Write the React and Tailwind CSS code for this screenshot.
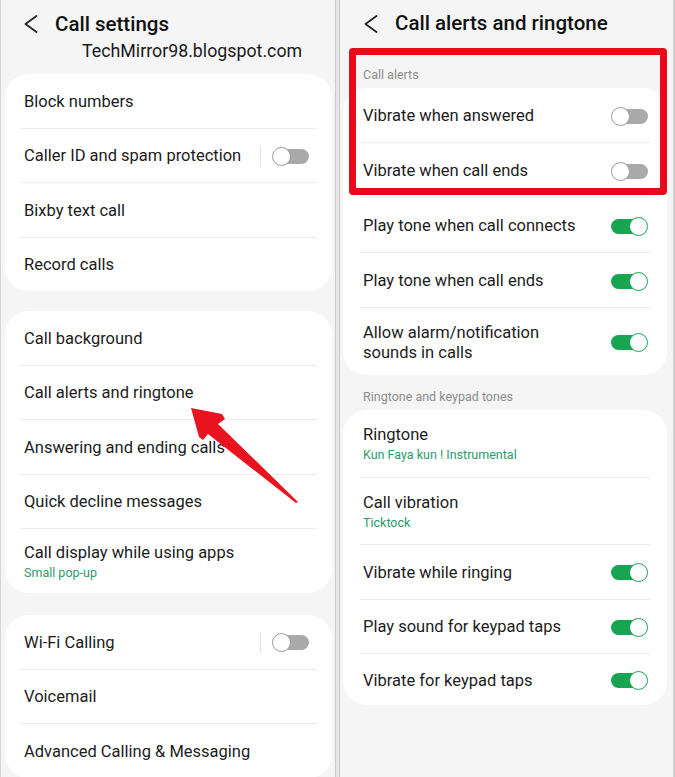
// App.jsx - Samsung call settings side-by-side screenshot
import React from 'react';

const FONT = { fontFamily: 'Roboto, "Noto Sans", Arial, sans-serif' };

const Toggle = ({ on }) => {
  if (on) {
    return (
      <div className="relative w-[37px] h-[19px] shrink-0">
        <div className="absolute left-0 top-[2px] h-[15px] w-[28px] rounded-full bg-[#17a552]"></div>
        <div className="absolute right-0 top-0 w-[19px] h-[19px] rounded-full bg-white border-[1.5px] border-[#17a552]"></div>
      </div>
    );
  }
  return (
    <div className="relative w-[37px] h-[19px] shrink-0">
      <div className="absolute right-0 top-[2px] h-[15px] w-[28px] rounded-full bg-[#a9a9a9]"></div>
      <div className="absolute left-0 top-0 w-[19px] h-[19px] rounded-full bg-white border-[1.5px] border-[#9c9c9c]"></div>
    </div>
  );
};

const Chevron = () => (
  <svg width="14" height="18" viewBox="0 0 14 18" className="shrink-0">
    <polyline points="12.5,1 1.5,9 12.5,17" fill="none" stroke="#222" strokeWidth="1.8" strokeLinecap="round" strokeLinejoin="round" />
  </svg>
);

const Divider = ({ side }) => (
  <div className={`h-px bg-[#ececec] ${side === 'left' ? 'mx-[15px]' : 'mx-[17px]'}`}></div>
);

const Row = ({ label, sub, toggle, sep, h, side }) => (
  <div
    className={`flex items-center justify-between pt-[2px] ${side === 'left' ? 'pl-[19px] pr-[23px]' : 'pl-[20px] pr-[19px]'}`}
    style={{ height: h }}
  >
    <div className="flex flex-col">
      <span className="text-[16.5px] leading-[20px] text-[#1c1c1c]">{label}</span>
      {sub && <span className="text-[12.5px] leading-[18px] text-[#2b9a6c] mt-[1px]">{sub}</span>}
    </div>
    {toggle !== undefined && (
      <div className="flex items-center">
        {sep && <div className="w-px h-[21px] bg-[#e2e2e2] mr-[11px]"></div>}
        <Toggle on={toggle} />
      </div>
    )}
  </div>
);

const Card = ({ rows, side, className }) => (
  <div className={`bg-white rounded-[24px] overflow-hidden ${className}`}>
    {rows.map((r, i) => (
      <React.Fragment key={i}>
        {i > 0 && <Divider side={side} />}
        <Row {...r} side={side} />
      </React.Fragment>
    ))}
  </div>
);

const SectionLabel = ({ children }) => (
  <div className="pl-[20px] text-[12.5px] leading-[16px] text-[#8c8c8c]">{children}</div>
);

export default function App() {
  const left1 = [
    { label: 'Block numbers', h: 53.5 },
    { label: 'Caller ID and spam protection', h: 53.5, toggle: false, sep: true },
    { label: 'Bixby text call', h: 53.5 },
    { label: 'Record calls', h: 53.5 },
  ];
  const left2 = [
    { label: 'Call background', h: 53.5 },
    { label: 'Call alerts and ringtone', h: 53.5 },
    { label: 'Answering and ending calls', h: 53.5 },
    { label: 'Quick decline messages', h: 53.5 },
    { label: 'Call display while using apps', sub: 'Small pop-up', h: 64 },
  ];
  const left3 = [
    { label: 'Wi-Fi Calling', h: 53.5, toggle: false, sep: true },
    { label: 'Voicemail', h: 53.5 },
    { label: 'Advanced Calling & Messaging', h: 53.5 },
  ];
  const right1 = [
    { label: 'Vibrate when answered', h: 54, toggle: false },
    { label: 'Vibrate when call ends', h: 54, toggle: false },
    { label: 'Play tone when call connects', h: 54, toggle: true },
    { label: 'Play tone when call ends', h: 54, toggle: true },
    { label: <>Allow alarm/notification<br />sounds in calls</>, h: 67, toggle: true },
  ];
  const right2 = [
    { label: 'Ringtone', sub: 'Kun Faya kun ! Instrumental', h: 67 },
    { label: 'Call vibration', sub: 'Ticktock', h: 66 },
    { label: 'Vibrate while ringing', h: 53.5, toggle: true },
    { label: 'Play sound for keypad taps', h: 53.5, toggle: true },
    { label: 'Vibrate for keypad taps', h: 51, toggle: true },
  ];

  return (
    <div className="relative w-[675px] h-[777px] flex overflow-hidden bg-[#f5f5f5]" style={FONT}>
      {/* Left screen */}
      <div className="w-[335px] h-full bg-[#f5f5f5] border-l border-[#d6d6d6] pl-[4px] pr-[3px]">
        <div className="pt-[11px] h-[74px]">
          <div className="flex items-center h-[26px] pl-[19px] gap-[17px]">
            <Chevron />
            <span className="text-[20.5px] font-medium text-[#111]">Call settings</span>
          </div>
          <div className="h-[28px] leading-[28px] pl-[77px] text-[17.8px] text-[#1a1a1a]">TechMirror98.blogspot.com</div>
        </div>
        <Card rows={left1} side="left" />
        <Card rows={left2} side="left" className="mt-[20px]" />
        <Card rows={left3} side="left" className="mt-[22px]" />
      </div>

      {/* Divider between screens */}
      <div className="w-[5px] h-full bg-[#e6e6e6] border-x border-[#c9c9c9]"></div>

      {/* Right screen */}
      <div className="relative flex-1 h-full bg-[#f5f5f5] border-r-2 border-[#d0d0d0] pl-[3px] pr-[6px]">
        <div className="flex items-center h-[47px] pl-[21px] gap-[17px]">
          <Chevron />
          <span className="text-[20.5px] font-medium text-[#111]">Call alerts and ringtone</span>
        </div>
        <div className="h-[41px] flex items-end pb-[5px]">
          <SectionLabel>Call alerts</SectionLabel>
        </div>
        <Card rows={right1} side="right" />
        <div className="h-[35px] flex items-end pb-[5px]">
          <SectionLabel>Ringtone and keypad tones</SectionLabel>
        </div>
        <Card rows={right2} side="right" />

        {/* Red highlight box */}
        <div className="absolute left-[9px] top-[48px] w-[318px] h-[147px] border-[7px] border-[#e8091a] rounded-[4px]"></div>
      </div>

      {/* Red arrow annotation */}
      <svg className="absolute left-0 top-0 pointer-events-none" width="675" height="777" viewBox="0 0 675 777">
        <polygon
          points="191,408 222,414 225,419 218,424 298,502 296,503 208,434 203,440 199,437"
          fill="#e8131f"
          strokeLinejoin="round"
        />
      </svg>
    </div>
  );
}
